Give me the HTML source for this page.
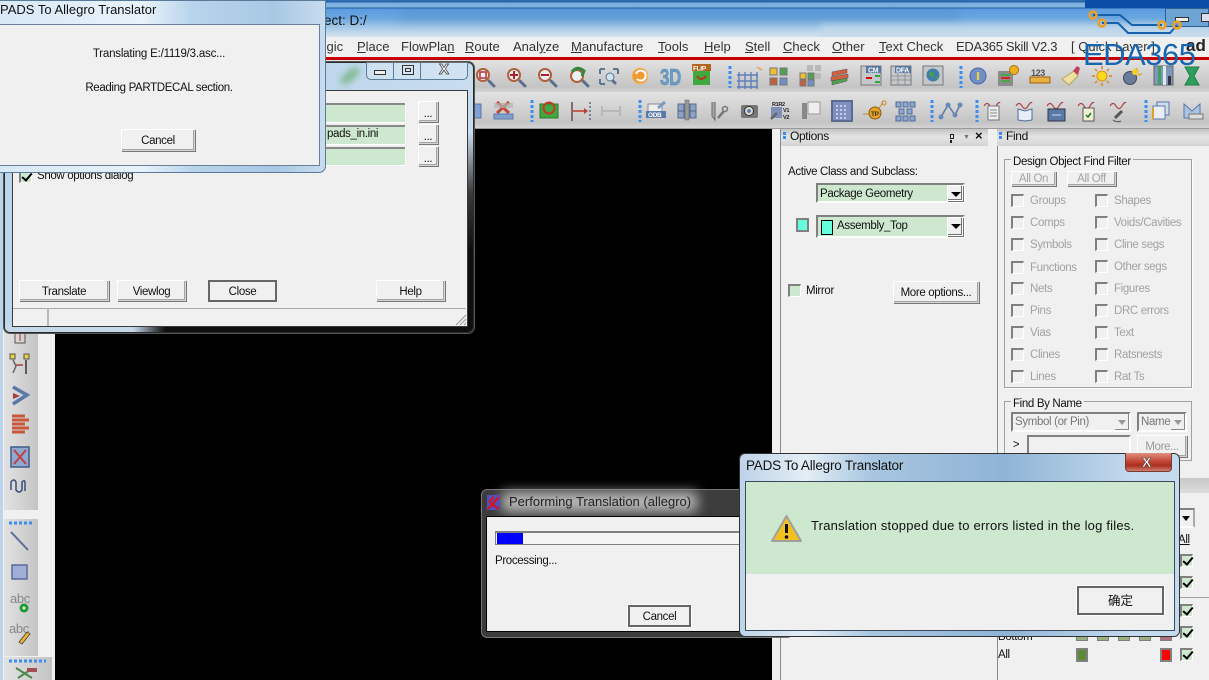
<!DOCTYPE html>
<html><head><meta charset="utf-8"><style>
html,body{margin:0;padding:0;width:1209px;height:680px;overflow:hidden;background:#000}
*{box-sizing:border-box}
body{font-family:"Liberation Sans","Noto Sans CJK SC",sans-serif;font-size:11.5px;letter-spacing:-.35px;color:#111;position:relative}
.a,.t,.b,.c,.cb{position:absolute}
.t{white-space:nowrap;line-height:16px}
.g{color:#a2a2a2}
.m{position:absolute;top:39px;font-size:13px;letter-spacing:0;line-height:16px;color:#333;white-space:nowrap}
.m u{text-decoration:underline}
.b{background:#f0f0f0;border:1px solid #d5d5d5;border-top-color:#fff;border-left-color:#fff;box-shadow:1px 1px 0 #777,inset -1px -1px 0 #a5a5a5;text-align:center;color:#111;white-space:nowrap;padding-top:1px}
.b.g{color:#a2a2a2}
.ck{position:absolute;width:13px;height:13px;background:#f0f0f0;border:1px solid #fff;border-top:2px solid #808080;border-left:2px solid #808080}
.ck.on{background:#cde8cf}
.ck.on:after{content:"";position:absolute;left:3px;top:-1px;width:4px;height:8px;border:solid #000;border-width:0 2px 2px 0;transform:rotate(40deg)}
.cb{background:#cde8cf;border:2px solid #808080;border-right-color:#fff;border-bottom-color:#fff}
.ar{position:absolute;background:#f0f0f0;border:1px solid #fff;box-shadow:inset -1px -1px 0 #707070,1px 1px 0 #707070}
.ar:after{content:"";position:absolute;left:3px;top:6px;border:5px solid transparent;border-top:5px solid #000;border-bottom:0}
.tb{position:absolute;background:linear-gradient(#e2e2e2,#c4c4c4 85%,#d4d4d4)}
</style></head><body>
<!-- window title background -->
<div class="a" style="left:0;top:0;width:1209px;height:37px;background:linear-gradient(#2f6fb3 0,#2a62a8 2px,#79b0e0 3px,#84b5e0 7px,#1f5a9f 8px,#5b9be0 9px,#6aa6e0 18px,#a9cbe8 28px,#d2e2ee 36px)"></div>
<div class="a" style="left:1085px;top:0;width:124px;height:8px;background:#0b4ea6"></div>
<div class="a" style="left:400px;top:11px;width:560px;height:10px;background:#4d7eb0;filter:blur(6px);opacity:.3"></div>
<div class="a" style="left:820px;top:26px;width:389px;height:11px;background:#c0d8ea;filter:blur(4px)"></div>
<div class="t" style="left:300px;top:14px;font-size:13.5px;line-height:14px;letter-spacing:0;color:#111">Project: D:/</div>
<div class="a" style="left:1165px;top:8px;width:44px;height:19px;border:1px solid #2c5f98;background:#6ea4d4"></div>
<div class="a" style="left:1175px;top:17px;width:14px;height:5px;background:#eee;border:1px solid #333"></div>
<div class="a" style="left:1201px;top:13px;width:10px;height:9px;background:#dde;border:1px solid #333"></div>
<!-- menu -->
<div class="a" style="left:0;top:37px;width:1209px;height:20px;background:#f0f0f0"></div>
<div class="a" style="left:0;top:57px;width:1209px;height:3px;background:#c80000"></div>
<span class="m" style="left:312px">Logic</span>
<span class="m" style="left:357px"><u>P</u>lace</span>
<span class="m" style="left:401px">FlowPla<u>n</u></span>
<span class="m" style="left:465px"><u>R</u>oute</span>
<span class="m" style="left:513px">Anal<u>y</u>ze</span>
<span class="m" style="left:571px"><u>M</u>anufacture</span>
<span class="m" style="left:658px"><u>T</u>ools</span>
<span class="m" style="left:704px"><u>H</u>elp</span>
<span class="m" style="left:745px"><u>S</u>tell</span>
<span class="m" style="left:783px"><u>C</u>heck</span>
<span class="m" style="left:832px"><u>O</u>ther</span>
<span class="m" style="left:879px"><u>T</u>ext Check</span>
<span class="m" style="left:956px;letter-spacing:-.3px">EDA365 Skill V2.3</span>
<span class="m" style="left:1071px">[ Quick Layer ]</span>
<span class="t" style="left:1186px;top:39px;font-size:17px;line-height:14px;letter-spacing:0;font-weight:bold;color:#222">ad</span>
<!-- toolbars -->
<div class="tb" style="left:0;top:60px;width:1209px;height:32px"></div>
<div class="tb" style="left:0;top:92px;width:1209px;height:36px"></div>
<div class="a" style="left:0;top:128px;width:1209px;height:1px;background:#999"></div>
<!-- canvas + side panels -->
<div class="a" style="left:0;top:129px;width:55px;height:551px;background:#f0f0f0"></div>
<div class="a" style="left:0;top:129px;width:3px;height:551px;background:#bcd4ec"></div>
<div class="tb" style="left:4px;top:330px;width:34px;height:180px;background:linear-gradient(90deg,#e2e2e2,#c4c4c4)"></div>
<div class="tb" style="left:4px;top:519px;width:34px;height:137px;background:linear-gradient(90deg,#e2e2e2,#c4c4c4)"></div>
<div class="tb" style="left:4px;top:657px;width:48px;height:23px;background:linear-gradient(90deg,#e2e2e2,#c4c4c4)"></div>
<div class="a" style="left:55px;top:129px;width:717px;height:551px;background:#000"></div>
<div class="a" style="left:772px;top:129px;width:437px;height:551px;background:#f0f0f0"></div>
<div class="a" style="left:780px;top:129px;width:1px;height:551px;background:#8a8a8a"></div>
<div class="a" style="left:997px;top:129px;width:1px;height:551px;background:#8a8a8a"></div>
<!-- icons -->
<svg class="a" style="left:0;top:0" width="1209" height="680" viewBox="0 0 1209 680" font-family="Liberation Sans,sans-serif">
<g fill="none" stroke="#1660ac" stroke-width="2"><path d="M1093 15H1120L1132 25H1162"/><path d="M1102 23H1118L1128 33H1170L1177 25"/></g>
<g fill="none" stroke="#eea020" stroke-width="2.5"><circle cx="1093" cy="15" r="3.5"/><circle cx="1102" cy="23" r="3.5"/><circle cx="1162" cy="25" r="3.5"/><circle cx="1177" cy="25" r="3.5"/></g>
<!-- row 1 -->
<g stroke="#5a6f8c" stroke-width="3" stroke-linecap="round"><path d="M489 81L494 86M520 81L525 86M551 81L556 86M583 81L588 86M613 81L615 83"/></g>
<g fill="#eef0f4" stroke="#b0603a" stroke-width="2"><circle cx="483" cy="75" r="6"/><circle cx="514" cy="75" r="6"/><circle cx="545" cy="75" r="6"/><circle cx="577" cy="76" r="6"/></g>
<path d="M510 75h8M514 71v8M541 75h8" stroke="#b02030" stroke-width="2"/>
<rect x="480" y="72" width="6" height="6" fill="none" stroke="#b03040" stroke-width="1.5"/>
<path d="M572 72q5-7 12-1l-2 5" fill="none" stroke="#2f8a3f" stroke-width="3"/>
<path d="M600 69h5M600 69v5M618 69h-5M618 69v5M600 84h5M600 84v-5" fill="none" stroke="#5a7894" stroke-width="2"/><circle cx="610" cy="77" r="4" fill="#cfe2f2" stroke="#5a7894"/>
<circle cx="640" cy="76" r="8" fill="#f09a30" stroke="#e8c08a"/><path d="M636 74a5 5 0 1 1 1 5" fill="none" stroke="#fff" stroke-width="2"/>
<text x="660" y="85" font-size="23" font-weight="bold" textLength="21" lengthAdjust="spacingAndGlyphs" fill="#6f9fc8" stroke="#4f7fa8" stroke-width=".5">3D</text>
<rect x="692" y="64" width="19" height="7" fill="#b4641e"/><text x="693" y="70.5" font-size="6.5" font-weight="bold" fill="#fff">FLIP</text><rect x="693" y="71" width="17" height="14" fill="#3fa83f"/><path d="M697 76q4 6 9 0" fill="none" stroke="#c03020" stroke-width="2"/>
<path d="M730 66v22M961 66v22" stroke="#3a8ef0" stroke-width="3" stroke-dasharray="3 2"/>
<path d="M739 72v17M745 72v17M751 72v17M757 72v17M737 75h21M737 81h21M737 87h21" stroke="#5f7fb8" stroke-width="1.4"/><path d="M757 67l5 3" stroke="#e8a050" stroke-width="1.5"/>
<rect x="770" y="68" width="7" height="7" fill="#eec030" stroke="#777"/><rect x="780" y="68" width="7" height="7" fill="#50a050" stroke="#777"/><rect x="770" y="78" width="7" height="7" fill="#c06040" stroke="#777"/><rect x="780" y="78" width="7" height="7" fill="#7090c8" stroke="#777"/>
<rect x="807" y="65" width="6" height="6" fill="#b8b8b8"/><rect x="815" y="65" width="6" height="6" fill="#b8b8b8"/><rect x="815" y="73" width="6" height="6" fill="#b8b8b8"/>
<rect x="800" y="73" width="6" height="6" fill="#eec030" stroke="#777"/><rect x="808" y="73" width="6" height="6" fill="#50a050" stroke="#777"/><rect x="800" y="80" width="6" height="6" fill="#c06040" stroke="#777"/><rect x="808" y="80" width="6" height="6" fill="#7090c8" stroke="#777"/>
<path d="M832 72l15-3v4l-15 3zM831 77l17-3v4l-17 3z" fill="#d06040" stroke="#555" stroke-width=".5"/><path d="M832 81l15-3v3l-15 4z" fill="#50a050" stroke="#555" stroke-width=".5"/>
<rect x="861" y="66" width="20" height="19" fill="#c4c8cc" stroke="#777"/><rect x="866" y="66" width="15" height="7" fill="#5577a0"/><text x="868" y="72.5" font-size="7" font-weight="bold" fill="#fff">CM</text><path d="M866 78h6" stroke="#d00" stroke-width="2"/><path d="M875 76h5M875 82h5" stroke="#3a3" stroke-width="2"/>
<rect x="891" y="66" width="20" height="19" fill="#c4c8cc" stroke="#777"/><rect x="895" y="66" width="16" height="7" fill="#5577a0"/><text x="896" y="72.5" font-size="7" font-weight="bold" fill="#fff">DFA</text><path d="M891 76h20M891 80h20M898 73v12M905 73v12" stroke="#888" stroke-width=".8"/>
<rect x="923" y="66" width="20" height="19" fill="#c4c8cc" stroke="#777"/><circle cx="933" cy="75" r="6.5" fill="#3f7fa8"/><path d="M929 72l5 1-1 4-3-1zM935 76l3 1-2 3z" fill="#4ca04c"/>
<circle cx="978" cy="76" r="8" fill="#6f8fc8" stroke="#51689a"/><path d="M978 72v8" stroke="#f0d040" stroke-width="2.2"/>
<rect x="998" y="71" width="15" height="15" fill="#8c8c8c"/><path d="M1001 75h9" stroke="#4a4" stroke-width="2"/><path d="M1001 78h9" stroke="#d22" stroke-width="2"/><path d="M1001 81h9" stroke="#4a4" stroke-width="2"/><circle cx="1014" cy="70" r="4.5" fill="#f0b020" stroke="#a87010"/>
<text x="1031" y="76" font-size="9" font-weight="bold" fill="#555">123</text><rect x="1030" y="77" width="20" height="6" fill="#e8b040" stroke="#a06010"/>
<path d="M1062 79l12-8 4 5-9 9z" fill="#f0e0a0" stroke="#b0a060"/><path d="M1073 71l4-5 3 2-2 7z" fill="#c04060"/>
<circle cx="1102" cy="76" r="5" fill="#f8d820" stroke="#e09010"/><path d="M1102 66v3M1102 83v3M1092 76h3M1109 76h3M1095 69l2 2M1107 81l2 2M1109 69l-2 2M1097 81l-2 2" stroke="#e08020" stroke-width="1.5"/>
<circle cx="1130" cy="78" r="6.5" fill="#6a7c98" stroke="#445"/><path d="M1136 68l2 4M1142 74l-4 1" stroke="#e8a020" stroke-width="1.5"/><circle cx="1135" cy="72" r="3" fill="#f0d020"/>
<rect x="1154" y="66" width="19" height="19" fill="#7f97b8" stroke="#666"/><rect x="1158" y="66" width="3" height="19" fill="#3f9f5f"/><rect x="1163" y="66" width="3" height="19" fill="#e0e8f0"/><rect x="1168" y="76" width="3" height="9" fill="#334"/>
<path d="M1185 67h14l-5 9 5 9h-14l5-9z" fill="#2f9f5f" stroke="#1f7f3f"/>
<!-- row 2 -->
<rect x="468" y="104" width="13" height="14" fill="#7f9fd8" stroke="#5f78a8"/>
<path d="M497 102l12 11M509 102l-12 11" stroke="#c04a3a" stroke-width="3"/><rect x="494" y="114" width="19" height="5" fill="#7f9fd0" stroke="#5f78a8"/><rect x="494" y="103" width="19" height="5" fill="#b4b4b4" opacity=".7"/>
<path d="M532 100v22M640 100v22M932 100v22M977 100v22M1146 100v22" stroke="#3a8ef0" stroke-width="3" stroke-dasharray="3 2"/>
<rect x="540" y="104" width="18" height="14" fill="#3fa83f" stroke="#2a7a2a"/><circle cx="549" cy="108" r="5.5" fill="none" stroke="#c03a2a" stroke-width="2"/>
<path d="M572 102v19" stroke="#6a4a4a" stroke-width="1.5"/><path d="M573 111h13" stroke="#c03a30" stroke-width="1.5"/><path d="M584 108l4 3-4 3z" fill="#c03a30"/><path d="M590 102v19" stroke="#5a6a88" stroke-dasharray="2 2" stroke-width="1.5"/>
<path d="M602 106v10M620 106v10M603 111h16" stroke="#b0b0b0" stroke-width="1.5"/>
<rect x="648" y="104" width="14" height="9" fill="#eee" stroke="#889"/><rect x="646" y="111" width="20" height="7" fill="#5a78a8"/><text x="648" y="117" font-size="6.5" font-weight="bold" fill="#fff">ODB</text><path d="M658 108l7-6" stroke="#7a9ac8" stroke-width="3"/>
<rect x="678" y="104" width="18" height="14" fill="#8fa2c4" stroke="#55698f"/><path d="M684 104v14M690 104v14M678 111h18" stroke="#4f6388"/><rect x="685" y="100" width="4" height="20" fill="#999" stroke="#666" stroke-width=".5"/>
<path d="M712 102v14l3 4v-18" fill="#aaa" stroke="#666"/><path d="M718 118l6-7" stroke="#777" stroke-width="2.5"/><circle cx="725" cy="109" r="2.5" fill="none" stroke="#777" stroke-width="1.5"/>
<rect x="741" y="105" width="17" height="13" rx="2" fill="#777"/><circle cx="749" cy="111" r="4.5" fill="#ddd" stroke="#333"/><circle cx="749" cy="111" r="2" fill="#5f7fa8"/>
<text x="772" y="106" font-size="5.5" font-weight="bold" fill="#222">R1R2</text><text x="783" y="112" font-size="5.5" font-weight="bold" fill="#222">V1</text><text x="783" y="119" font-size="5.5" font-weight="bold" fill="#222">V2</text><rect x="771" y="107" width="11" height="11" fill="#7f8fb8"/><path d="M771 119l6-6" stroke="#666" stroke-width="2.5"/>
<rect x="802" y="103" width="5" height="16" fill="#888"/><rect x="808" y="102" width="12" height="12" fill="#eee" stroke="#999"/>
<rect x="832" y="101" width="20" height="20" fill="#7f8fbf" stroke="#5a6a90" stroke-width="2"/><path d="M836 106h12M836 110h12M836 114h12M836 118h12" stroke="#dde" stroke-width="1.5" stroke-dasharray="2 2"/>
<circle cx="875" cy="113" r="6" fill="#e8a020" stroke="#8a5a10"/><text x="871" y="116" font-size="6.5" font-weight="bold" fill="#333">TP</text><path d="M863 114h6M879 108l4-5" stroke="#c88a20"/><circle cx="884" cy="103" r="2" fill="none" stroke="#c88a20"/>
<g fill="#8fa8d0" stroke="#4f6a98"><rect x="896" y="102" width="5" height="5"/><rect x="903" y="102" width="5" height="5"/><rect x="910" y="102" width="5" height="5"/><rect x="899" y="109" width="5" height="5"/><rect x="907" y="109" width="5" height="5"/><rect x="896" y="116" width="5" height="5"/><rect x="903" y="116" width="5" height="5"/><rect x="910" y="116" width="5" height="5"/></g>
<path d="M941 117l7-12 7 10 5-10" fill="none" stroke="#5a78a8" stroke-width="1.5"/><g fill="#6a88b8"><circle cx="941" cy="117" r="2.5"/><circle cx="948" cy="105" r="2.5"/><circle cx="955" cy="115" r="2.5"/><circle cx="960" cy="105" r="2.5"/></g>
<g fill="none" stroke="#b04040" stroke-width="1.2"><path d="M984 106q3-5 6 0t6 0t4-3"/><path d="M1016 106q3-5 6 0t6 0t4-3"/><path d="M1047 106q3-5 6 0t6 0t4-3"/><path d="M1078 106q3-5 6 0t6 0t4-3"/><path d="M1110 106q3-5 6 0t6 0t4-3"/></g>
<rect x="988" y="106" width="11" height="14" fill="#eee" stroke="#777"/><path d="M990 110h7M990 113h7M990 116h7" stroke="#888"/>
<path d="M1018 109l7 2 7-2v11l-7 1-7-1z" fill="#e8eef8" stroke="#4f6a98"/>
<rect x="1048" y="109" width="17" height="12" fill="#5a78a8" stroke="#334"/><path d="M1052 115h9" stroke="#cde"/>
<rect x="1083" y="108" width="11" height="13" fill="#f0f0d8" stroke="#555"/><path d="M1086 115l2 2 3-4" stroke="#1a7a1a" fill="none" stroke-width="1.5"/>
<path d="M1115 118l7-7" stroke="#555" stroke-width="3"/><path d="M1113 120q4 3 8 1" stroke="#555" fill="none"/>
<rect x="1157" y="102" width="12" height="13" fill="#cfdcec" stroke="#5a78a8"/><rect x="1153" y="106" width="12" height="13" fill="#e8eef4" stroke="#5a78a8"/><path d="M1153 108v11" stroke="#e0a020" stroke-width="2"/>
<path d="M1184 104l8 7 8-7v14h-16z" fill="#a9c4e0" stroke="#5a78a8"/><rect x="1189" y="114" width="14" height="5" fill="#ddd" stroke="#777"/>
<!-- left toolbar -->
<rect x="15" y="331" width="10" height="12" fill="none" stroke="#555"/><path d="M22 333v8" stroke="#b03030" transform="translate(-2 0)"/>
<rect x="10" y="354" width="5" height="5" fill="#e8d040" stroke="#555"/><rect x="24" y="354" width="5" height="5" fill="#e8d040" stroke="#555"/><path d="M13 360l3 6-3 7" fill="none" stroke="#666" stroke-width="1.5"/><path d="M26 360v14" stroke="#333" stroke-width="1.5"/><path d="M16 365h7" stroke="#a04040" stroke-width="1.5"/>
<path d="M13 387l14 8-14 9" fill="none" stroke="#5a78a8" stroke-width="3.5"/><path d="M13 393l7 3-7 3" fill="#a04040"/>
<path d="M12 416h13M12 420h17M12 424h13M12 428h17M12 432h13" stroke="#c8583a" stroke-width="3"/>
<rect x="11" y="447" width="18" height="20" fill="#8fa8d0" stroke="#3f5a88" stroke-width="1.5"/><path d="M14 450l12 14M26 450l-12 14" stroke="#c04040" stroke-width="2"/>
<path d="M11 490v-8q3-4 5 0v8q3 4 6 0v-8q3-3 3 1v8" fill="none" stroke="#3a5078" stroke-width="1.5"/>
<path d="M9 523h24M9 661h37" stroke="#3a8ef0" stroke-width="3" stroke-dasharray="3 2"/>
<path d="M11 532l17 18" stroke="#5a6c98" stroke-width="2"/>
<rect x="12" y="565" width="15" height="14" fill="#a0aed8" stroke="#5a6a98" stroke-width="1.5"/>
<text x="10" y="603" font-size="13" fill="#888">abc</text><circle cx="24" cy="608" r="4.5" fill="#1a9a30"/><path d="M22 608h4M24 606v4" stroke="#fff"/>
<text x="9" y="633" font-size="13" fill="#888">abc</text><path d="M19 642l8-10 3 2-8 10z" fill="#f0b030" stroke="#333" stroke-width=".7"/>
<path d="M16 668l16 10M18 678l12-8" stroke="#4a8a4a" stroke-width="2"/><rect x="27" y="668" width="10" height="4" fill="#a05050"/>
</svg>
<div class="t" style="left:1083px;top:38px;font-size:31px;line-height:34px;color:#1766b0;letter-spacing:-.5px">EDA365</div>
<!-- Options -->
<div class="a" style="left:781px;top:129px;width:207px;height:17px;background:linear-gradient(#c4c4c4,#e4e4e4 45%,#d4d4d4)"></div>
<div class="a" style="left:997px;top:129px;width:212px;height:17px;background:linear-gradient(#c4c4c4,#e4e4e4 45%,#d4d4d4)"></div>
<div class="a" style="left:783px;top:132px;width:3px;height:3px;background:#3a8ef0;box-shadow:0 4px 0 #3a8ef0"></div>
<div class="a" style="left:999px;top:132px;width:3px;height:3px;background:#3a8ef0;box-shadow:0 4px 0 #3a8ef0"></div>
<div class="t" style="left:790px;top:129px;font-size:12px;line-height:14px">Options</div>
<div class="t" style="left:1006px;top:129px;font-size:12px;line-height:14px">Find</div>
<div class="a" style="left:950px;top:134px;width:4px;height:5px;border:1px solid #222;box-shadow:-1px 5px 0 -1px #222"></div>
<div class="t" style="left:963px;top:131px;font-size:7px;line-height:14px;color:#777">&#9660;</div>
<div class="t" style="left:975px;top:129px;font-size:13px;line-height:14px;font-weight:bold">&#215;</div>
<div class="t" style="left:788px;top:164px">Active Class and Subclass:</div>
<div class="cb" style="left:816px;top:183px;width:149px;height:20px"></div>
<div class="t" style="left:820px;top:186px">Package Geometry</div>
<div class="ar" style="left:947px;top:185px;width:16px;height:16px"></div>
<div class="a" style="left:796px;top:218px;width:13px;height:14px;border:2px solid #808080;background:#66ffdd"></div>
<div class="cb" style="left:816px;top:215px;width:149px;height:23px"></div>
<div class="a" style="left:821px;top:220px;width:12px;height:15px;border:1px solid #000;background:#66ffdd"></div>
<div class="t" style="left:837px;top:218px">Assembly_Top</div>
<div class="ar" style="left:947px;top:217px;width:16px;height:19px"></div>
<div class="a" style="left:788px;top:284px;width:13px;height:13px;background:#cde8cf;border:1px solid #fff;border-top:2px solid #808080;border-left:2px solid #808080"></div>
<div class="t" style="left:806px;top:283px">Mirror</div>
<div class="b" style="left:893px;top:281px;width:86px;height:22px;line-height:21px">More options...</div>
<!-- Find -->
<div class="a" style="left:1004px;top:159px;width:188px;height:229px;border:1px solid #a0a0a0;box-shadow:1px 1px 0 #fff"></div>
<div class="t" style="left:1011px;top:154px;background:#f0f0f0;padding:0 2px">Design Object Find Filter</div>
<div class="b g" style="left:1011px;top:171px;width:45px;height:15px;line-height:14px;padding-top:0">All On</div>
<div class="b g" style="left:1067px;top:171px;width:49px;height:15px;line-height:14px;padding-top:0">All Off</div>
<div class="ck" style="left:1011px;top:194px"></div><div class="t g" style="left:1030px;top:193px">Groups</div>
<div class="ck" style="left:1095px;top:194px"></div><div class="t g" style="left:1114px;top:193px">Shapes</div>
<div class="ck" style="left:1011px;top:216px"></div><div class="t g" style="left:1030px;top:215px">Comps</div>
<div class="ck" style="left:1095px;top:216px"></div><div class="t g" style="left:1114px;top:215px">Voids/Cavities</div>
<div class="ck" style="left:1011px;top:238px"></div><div class="t g" style="left:1030px;top:237px">Symbols</div>
<div class="ck" style="left:1095px;top:238px"></div><div class="t g" style="left:1114px;top:237px">Cline segs</div>
<div class="ck" style="left:1011px;top:261px"></div><div class="t g" style="left:1030px;top:260px">Functions</div>
<div class="ck" style="left:1095px;top:260px"></div><div class="t g" style="left:1114px;top:259px">Other segs</div>
<div class="ck" style="left:1011px;top:282px"></div><div class="t g" style="left:1030px;top:281px">Nets</div>
<div class="ck" style="left:1095px;top:282px"></div><div class="t g" style="left:1114px;top:281px">Figures</div>
<div class="ck" style="left:1011px;top:304px"></div><div class="t g" style="left:1030px;top:303px">Pins</div>
<div class="ck" style="left:1095px;top:304px"></div><div class="t g" style="left:1114px;top:303px">DRC errors</div>
<div class="ck" style="left:1011px;top:326px"></div><div class="t g" style="left:1030px;top:325px">Vias</div>
<div class="ck" style="left:1095px;top:326px"></div><div class="t g" style="left:1114px;top:325px">Text</div>
<div class="ck" style="left:1011px;top:348px"></div><div class="t g" style="left:1030px;top:347px">Clines</div>
<div class="ck" style="left:1095px;top:348px"></div><div class="t g" style="left:1114px;top:347px">Ratsnests</div>
<div class="ck" style="left:1011px;top:370px"></div><div class="t g" style="left:1030px;top:369px">Lines</div>
<div class="ck" style="left:1095px;top:370px"></div><div class="t g" style="left:1114px;top:369px">Rat Ts</div>
<div class="a" style="left:1004px;top:401px;width:188px;height:60px;border:1px solid #a0a0a0"></div>
<div class="t" style="left:1011px;top:396px;background:#f0f0f0;padding:0 2px">Find By Name</div>
<div class="a" style="left:1011px;top:412px;width:120px;height:20px;border:2px solid #808080;border-right-color:#fff;border-bottom-color:#fff"></div>
<div class="t g" style="left:1015px;top:414px;color:#777">Symbol (or Pin)</div>
<div class="a" style="left:1115px;top:414px;width:14px;height:16px;background:#f0f0f0;box-shadow:inset -1px -1px 0 #888"></div>
<div class="a" style="left:1118px;top:420px;border:4px solid transparent;border-top:5px solid #999;border-bottom:0"></div>
<div class="a" style="left:1137px;top:412px;width:50px;height:20px;border:2px solid #808080;border-right-color:#fff;border-bottom-color:#fff"></div>
<div class="t g" style="left:1141px;top:414px;color:#777">Name</div>
<div class="a" style="left:1171px;top:414px;width:14px;height:16px;background:#f0f0f0;box-shadow:inset -1px -1px 0 #888"></div>
<div class="a" style="left:1174px;top:420px;border:4px solid transparent;border-top:5px solid #999;border-bottom:0"></div>
<div class="t" style="left:1010px;top:437px">&nbsp;&gt;</div>
<div class="a" style="left:1027px;top:435px;width:104px;height:30px;border:2px solid #808080;border-bottom:0;border-right-color:#fff"></div>
<div class="b g" style="left:1137px;top:435px;width:50px;height:22px;line-height:21px;color:#999">More...</div>
<!-- lower right -->
<div class="a" style="left:998px;top:478px;width:211px;height:15px;background:linear-gradient(#c8c8c8,#dcdcdc)"></div>
<div class="a" style="left:1177px;top:508px;width:18px;height:20px;border:2px solid #808080;border-right-color:#aaa;border-bottom-color:#fff"></div>
<div class="a" style="left:1182px;top:516px;border:4px solid transparent;border-top:5px solid #000;border-bottom:0"></div>
<div class="t" style="left:1178px;top:532px;text-decoration:underline">All</div>
<div class="a" style="left:998px;top:597px;width:211px;height:1px;background:#a0a0a0"></div>
<div class="t" style="left:998px;top:647px">All</div>
<div class="a" style="left:1076px;top:648px;width:12px;height:14px;border:2px solid #808080;background:#5f8a3a"></div>
<div class="a" style="left:1160px;top:648px;width:12px;height:14px;border:2px solid #808080;background:#ff0000"></div>
<div class="t" style="left:998px;top:629px">Bottom</div>
<div class="a" style="left:1076px;top:632px;width:12px;height:9px;border:1px solid #808080;background:#9ab080"></div>
<div class="a" style="left:1097px;top:632px;width:12px;height:9px;border:1px solid #808080;background:#9ab080"></div>
<div class="a" style="left:1118px;top:632px;width:12px;height:9px;border:1px solid #808080;background:#9ab080"></div>
<div class="a" style="left:1139px;top:632px;width:12px;height:9px;border:1px solid #808080;background:#9ab080"></div>
<div class="a" style="left:1160px;top:632px;width:12px;height:9px;border:1px solid #808080;background:#b07080"></div>
<div class="ck on" style="left:1180px;top:554px"></div>
<div class="ck on" style="left:1180px;top:576px"></div>
<div class="ck on" style="left:1180px;top:604px"></div>
<div class="ck on" style="left:1180px;top:626px"></div>
<div class="ck on" style="left:1180px;top:648px"></div>
<!-- translator window -->
<div class="a" style="left:4px;top:62px;width:470px;height:271px;border:1px solid #2a2a2a;border-radius:6px;box-shadow:0 0 0 1px #555;background:linear-gradient(90deg,#bcd6ec 0,#a8c8e4 30%,#bcd6ec 60%,#c8dcee 100%);overflow:hidden">
<div class="a" style="left:150px;top:70px;right:0;bottom:0;background:linear-gradient(#c8dcee,#3a3a3a 30%,#0e0e0e 60%)"></div>
<div class="a" style="left:0;bottom:0;width:160px;height:8px;background:linear-gradient(90deg,#c4d8ea,#c4d8ea 80%,#111)"></div>
<div class="a" style="left:335px;top:10px;width:20px;height:6px;background:#5fa862;filter:blur(4px);transform:rotate(-40deg)"></div>
</div>
<div class="a" style="left:12px;top:90px;width:456px;height:237px;background:#f0f0f0;border:1px solid #3a3a3a"></div>
<div class="a" style="left:366px;top:62px;width:102px;height:18px;border:1px solid #5a7a98;border-top:0;border-radius:0 0 5px 5px;background:rgba(230,240,250,.35)"></div>
<div class="a" style="left:393px;top:62px;width:1px;height:17px;background:#5a7a98"></div>
<div class="a" style="left:420px;top:62px;width:1px;height:17px;background:#5a7a98"></div>
<div class="a" style="left:374px;top:70px;width:12px;height:5px;border:1px solid #333;background:#eee"></div>
<div class="a" style="left:402px;top:65px;width:12px;height:10px;border:1px solid #333;background:#d8e4f0"></div>
<div class="a" style="left:405px;top:68px;width:6px;height:4px;border:1px solid #333"></div>
<div class="t" style="left:439px;top:63px;font-size:15px;line-height:14px;letter-spacing:0;font-weight:bold;color:#fff;-webkit-text-stroke:.7px #333">X</div>
<div class="a" style="left:200px;top:103px;width:205px;height:19px;background:#cde8cf;border-top:2px solid #888;box-shadow:0 1px 0 #fff,1px 0 0 #fff"></div>
<div class="a" style="left:200px;top:125px;width:205px;height:19px;background:#cde8cf;border-top:2px solid #888;box-shadow:0 1px 0 #fff,1px 0 0 #fff"></div>
<div class="a" style="left:200px;top:147px;width:205px;height:18px;background:#cde8cf;border-top:2px solid #888;box-shadow:0 1px 0 #fff,1px 0 0 #fff"></div>
<div class="t" style="left:327px;top:126px">pads_in.ini</div>
<div class="b" style="left:418px;top:101px;width:20px;height:21px;line-height:24px;padding-top:0">...</div>
<div class="b" style="left:418px;top:124px;width:20px;height:20px;line-height:24px;padding-top:0">...</div>
<div class="b" style="left:418px;top:146px;width:20px;height:20px;line-height:24px;padding-top:0">...</div>
<div class="ck on" style="left:19px;top:170px"></div>
<div class="t" style="left:37px;top:168px">Show options dialog</div>
<div class="b" style="left:19px;top:280px;width:90px;height:21px;line-height:20px">Translate</div>
<div class="b" style="left:117px;top:280px;width:69px;height:21px;line-height:20px">Viewlog</div>
<div class="b" style="left:208px;top:280px;width:69px;height:22px;line-height:18px;border:2px solid #666;box-shadow:none">Close</div>
<div class="b" style="left:376px;top:280px;width:69px;height:21px;line-height:20px">Help</div>
<div class="a" style="left:13px;top:308px;width:453px;height:1px;background:#a8a8a8"></div>
<div class="a" style="left:47px;top:308px;width:2px;height:18px;background:#b8b8b8"></div>
<svg class="a" style="left:455px;top:314px" width="12" height="12"><path d="M1 11L11 1M5 11L11 5M9 11L11 9" stroke="#999"/></svg>
<!-- progress window -->
<div class="a" style="left:481px;top:489px;width:312px;height:149px;background:#3c3c3c;border:1px solid #777;border-radius:6px"></div>
<div class="a" style="left:502px;top:492px;width:195px;height:20px;background:#b8b8b8;filter:blur(6px)"></div>
<div class="a" style="left:487px;top:495px;width:13px;height:15px;background:#5050c0"></div>
<svg class="a" style="left:487px;top:495px" width="14" height="16"><path d="M1 14L12 2M3 8L12 14M7 2L2 7" stroke="#e01010" stroke-width="2" fill="none"/></svg>
<div class="t" style="left:509px;top:495px;font-size:13px;line-height:14px;letter-spacing:0;color:#222">Performing Translation (allegro)</div>
<div class="a" style="left:486px;top:516px;width:260px;height:116px;background:#f0f0f0;border:1px solid #000"></div>
<div class="a" style="left:495px;top:531px;width:250px;height:14px;border:1px solid #808080;border-top-width:2px;border-bottom-color:#808080;background:#f4f4f4"></div>
<div class="a" style="left:497px;top:533px;width:26px;height:11px;background:#0000ff"></div>
<div class="t" style="left:495px;top:553px">Processing...</div>
<div class="b" style="left:628px;top:605px;width:63px;height:22px;line-height:19px;border:2px solid #666;box-shadow:none;outline:1px solid #fff">Cancel</div>
<!-- error window -->
<div class="a" style="left:739px;top:453px;width:441px;height:184px;border:1px solid #333;border-radius:6px;background:linear-gradient(90deg,#bdd3e8,#e4eef6 15%,#a8c6e0 30%,#8fb4d6 60%,#c4daee 90%)"></div>
<div class="t" style="left:746px;top:459px;font-size:13.5px;line-height:14px;letter-spacing:-.2px;color:#111">PADS To Allegro Translator</div>
<div class="a" style="left:1125px;top:453px;width:47px;height:19px;border:1px solid #7a3a30;border-top:0;border-radius:0 0 4px 4px;background:linear-gradient(#e09080,#c04030 50%,#a83020 70%,#d08070)"></div>
<div class="t" style="left:1142px;top:455px;font-size:14px;line-height:14px;letter-spacing:0;font-weight:bold;color:#fff;-webkit-text-stroke:.5px #444">X</div>
<div class="a" style="left:745px;top:481px;width:430px;height:150px;background:#f0f0f0;border:1px solid #3a4a5a"></div>
<div class="a" style="left:746px;top:482px;width:428px;height:92px;background:#cde8cf"></div>
<svg class="a" style="left:770px;top:514px" width="33" height="30"><path d="M16.5 2L31 27H2Z" fill="#f4c020" stroke="#a0a0a0" stroke-width="2" stroke-linejoin="round"/><path d="M16.5 10v9" stroke="#111" stroke-width="3"/><circle cx="16.5" cy="23" r="1.8" fill="#111"/></svg>
<div class="t" style="left:811px;top:519px;font-size:13px;line-height:14px;letter-spacing:.2px;color:#111">Translation stopped due to errors listed in the log files.</div>
<div class="b" style="left:1077px;top:586px;width:87px;height:29px;line-height:26px;padding-top:0;font-size:12.5px;letter-spacing:0;border:2px solid #666;box-shadow:none;outline:1px solid #fff">确定</div>
<!-- top progress window -->
<div class="a" style="left:-8px;top:0;width:334px;height:173px;border:1px solid #5a7a98;border-radius:0 0 7px 7px;background:linear-gradient(90deg,#d8e8f6,#e8f2fa 45%,#b8d4ec 60%,#a8c8e4 85%,#c8dcee)"></div>
<div class="t" style="left:0;top:3px;font-size:13px;line-height:14px;letter-spacing:0;color:#111">PADS To Allegro Translator</div>
<div class="a" style="left:-2px;top:24px;width:322px;height:142px;background:#f0f0f0;border:1px solid #6a8098"></div>
<div class="t" style="left:0;width:318px;text-align:center;top:46px;letter-spacing:-.2px">Translating E:/1119/3.asc...</div>
<div class="t" style="left:0;width:318px;text-align:center;top:80px">Reading PARTDECAL section.</div>
<div class="b" style="left:121px;top:129px;width:74px;height:22px;line-height:20px">Cancel</div>
</body></html>
